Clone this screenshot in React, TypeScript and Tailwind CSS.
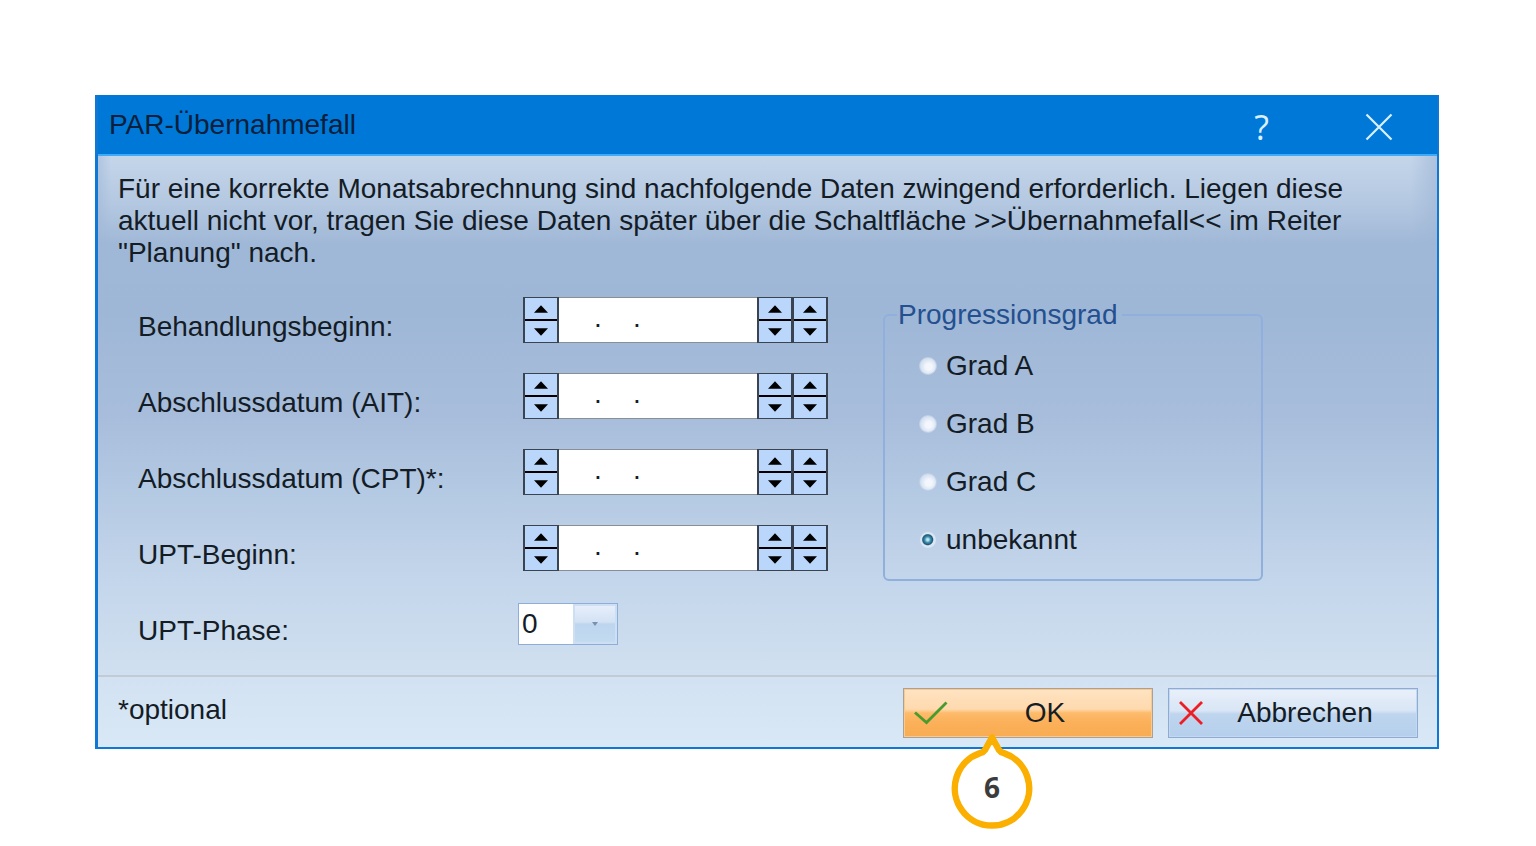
import { useState } from 'react';

const dateFields = [
  { id: 'behandlungsbeginn', label: 'Behandlungsbeginn:' },
  { id: 'abschluss-ait', label: 'Abschlussdatum (AIT):' },
  { id: 'abschluss-cpt', label: 'Abschlussdatum (CPT)*:' },
  { id: 'upt-beginn', label: 'UPT-Beginn:' },
];

const grades = ['Grad A', 'Grad B', 'Grad C', 'unbekannt'];

function Spinner({ name }: { name: string }) {
  return (
    <div className="flex flex-col w-9 h-full border-x-2 border-y border-[#3a4450]">
      <button type="button" aria-label={`${name} erhöhen`} className="flex-1 flex items-center justify-center bg-[#bad7fb] border-b border-black">
        <svg viewBox="0 0 14 8" className="w-[14px] h-2">
          <path d="M7 0.3 L14 7.8 H0 Z" fill="#000" />
        </svg>
      </button>
      <button type="button" aria-label={`${name} verringern`} className="flex-1 flex items-center justify-center bg-[#bad7fb] border-t border-black">
        <svg viewBox="0 0 14 8" className="w-[14px] h-2">
          <path d="M7 7.7 L14 0.2 H0 Z" fill="#000" />
        </svg>
      </button>
    </div>
  );
}

function DateField({ id }: { id: string }) {
  const [value, setValue] = useState('    .    .');

  return (
    <div className="flex h-[46px] w-[305px] ml-[5px]">
      <Spinner name="Tag" />
      <input
        id={id}
        type="text"
        value={value}
        onChange={(e) => setValue(e.target.value)}
        className="flex-1 min-w-0 bg-white border-y border-[#8a8f96] pl-1 pb-1 outline-none"
      />
      <Spinner name="Monat" />
      <div className="-ml-px h-full">
        <Spinner name="Jahr" />
      </div>
    </div>
  );
}

export default function App() {
  const [grade, setGrade] = useState('unbekannt');
  const [phase, setPhase] = useState('0');

  return (
    <div className="min-h-screen bg-white pt-[95px] pl-[95px] pr-[97px] font-['Liberation_Sans',Arial,sans-serif] text-[28px] leading-8 text-[#141c26]">
      <div role="dialog" aria-labelledby="dialog-title" className="border-2 border-l-[3px] border-t-0 border-[#0f78d4]">
        {/* Title bar */}
        <header className="flex items-center justify-between h-[61px] pl-[11px] pr-[44px] bg-[#0078d7] border-b-2 border-[#3fabf7]">
          <h1 id="dialog-title" className="text-[#06203c]">PAR-Übernahmefall</h1>
          <div className="flex items-center gap-24 pt-1 text-[#d9f0ff]">
            <button type="button" aria-label="Hilfe" className="font-['Open_Sans',sans-serif] text-[34px] leading-8">
              ?
            </button>
            <button type="button" aria-label="Schließen">
              <svg viewBox="0 0 28 28" className="block w-7 h-7" fill="none" stroke="currentColor" strokeWidth="2.2">
                <path d="M1.5 1.5 L26.5 26.5 M26.5 1.5 L1.5 26.5" />
              </svg>
            </button>
          </div>
        </header>

        {/* Form */}
        <main className="px-5 pt-[17px] pb-7 [background:linear-gradient(to_right,#9fb7d788,transparent_1%,transparent_98%,#9fb7d7aa)_top/100%_90px_no-repeat,linear-gradient(to_bottom,#c5d6ea_0%,#b4c8e1_9%,#a0b8d7_17%,#9fb7d7_30%,#a7bddb_50%,#b5cae3_66%,#c4d6eb_82%,#d0e0f0_100%)]">
          <p>
            Für eine korrekte Monatsabrechnung sind nachfolgende Daten zwingend erforderlich. Liegen diese
            aktuell nicht vor, tragen Sie diese Daten später über die Schaltfläche &gt;&gt;Übernahmefall&lt;&lt; im Reiter
            "Planung" nach.
          </p>

          <div className="flex items-start gap-[55px] mt-7 pl-5">
            <div className="flex flex-col gap-[30px]">
              {dateFields.map((field) => (
                <div key={field.id} className="flex items-end">
                  <label htmlFor={field.id} className="w-[380px]">{field.label}</label>
                  <DateField id={field.id} />
                </div>
              ))}

              <div className="flex items-end h-[46px]">
                <label htmlFor="upt-phase" className="w-[380px]">UPT-Phase:</label>
                <div className="relative self-center w-[100px]">
                  <select
                    id="upt-phase"
                    value={phase}
                    onChange={(e) => setPhase(e.target.value)}
                    className="block appearance-none w-full h-[42px] pl-[3px] bg-white border border-[#8fadd9] outline-none"
                  >
                    {['0', '1', '2', '3', '4', '5', '6'].map((p) => (
                      <option key={p}>{p}</option>
                    ))}
                  </select>
                  <span className="absolute inset-y-px right-px w-[44px] flex items-center justify-center pointer-events-none border-2 border-[#cfdff3] bg-[linear-gradient(to_bottom,#e6eefa_0%,#d3e2f4_45%,#bdd5ee_50%,#c3dbf0_100%)]">
                    <svg viewBox="0 0 6 4" className="w-[6px] h-1">
                      <path d="M0 0 H6 L3 4 Z" fill="#7a91ad" />
                    </svg>
                  </span>
                </div>
              </div>
            </div>

            <fieldset className="flex-1 max-w-[380px] border-2 border-[#90afdc] rounded-md pl-[34px] pt-[17px] pb-[23px]">
              <legend className="-ml-[22px] pl-[1px] pr-[5px] leading-9 text-[#24508f]">Progressionsgrad</legend>
              <div className="flex flex-col items-start gap-[26px]">
                {grades.map((g) => (
                  <label key={g} className="flex items-center gap-[9px]">
                    <input
                      type="radio"
                      name="progressionsgrad"
                      checked={grade === g}
                      onChange={() => setGrade(g)}
                      className="appearance-none w-[18px] h-[18px] rounded-full border border-[#c0d1e8] bg-[radial-gradient(circle_at_55%_55%,#f3f7fd_0_25%,#d9e3f2_60%,#c6d4e8_100%)] checked:bg-[radial-gradient(circle_at_48%_48%,#b9e6f2_0_8%,#3c8cab_26%,#1d5878_42%,#dbe7f4_52%,#d3e0f0_100%)]"
                    />
                    {g}
                  </label>
                ))}
              </div>
            </fieldset>
          </div>
        </main>

        {/* Footer */}
        <footer className="flex items-start justify-between pl-5 pr-[19px] pt-[11px] pb-[9px] border-t-2 border-[#c2cad4] bg-[linear-gradient(to_bottom,#d2e2f2,#d8e8f6)]">
          <span className="leading-11">*optional</span>
          <div className="flex gap-[15px]">
            <div className="relative">
              <button
                type="button"
                className="flex items-center w-[250px] h-[50px] px-[10px] border border-[#a9a195] bg-[linear-gradient(to_bottom,#ffe3c2_0%,#fed9ae_42%,#fdbb6b_50%,#fbb059_70%,#f8ac52_100%)] shadow-[inset_0_0_0_1px_#f9c98d]"
              >
                <svg viewBox="0 0 34 24" className="w-[34px] h-6" fill="none" stroke="#4a9b2e" strokeWidth="2.8">
                  <path d="M1 11.5 L12.5 21.5 L32.5 1.5" />
                </svg>
                <span className="flex-1 text-center">OK</span>
              </button>

              {/* Step marker pointing at the OK button */}
              <div className="absolute left-[48px] top-[45px] w-[82px] h-[98px]">
                <svg viewBox="0 0 82 98" className="block w-full h-full" fill="#fff" stroke="#fbaf00" strokeWidth="6.5" strokeLinejoin="round">
                  <path d="M41 4.5 L34 17 Q32.5 19.3 29 20.2 A37.2 37.2 0 1 0 53 20.2 Q49.5 19.3 48 17 Z" />
                </svg>
                <span className="absolute inset-x-0 bottom-7 text-center font-['Open_Sans',sans-serif] font-bold text-[28px] text-[#3c3c3c]">
                  6
                </span>
              </div>
            </div>

            <button
              type="button"
              className="flex items-center w-[250px] h-[50px] px-[10px] border border-[#8fabd3] bg-[linear-gradient(to_bottom,#e9f0fa_0%,#d9e6f5_45%,#bfd5ee_52%,#b4cfec_100%)] shadow-[inset_0_0_0_1px_#c4d8ef]"
            >
              <svg viewBox="0 0 24 24" className="w-6 h-6" fill="none" stroke="#ee1c25" strokeWidth="2.8">
                <path d="M1 1 L23 23 M23 1 L1 23" />
              </svg>
              <span className="flex-1 text-center">Abbrechen</span>
            </button>
          </div>
        </footer>
      </div>
    </div>
  );
}
